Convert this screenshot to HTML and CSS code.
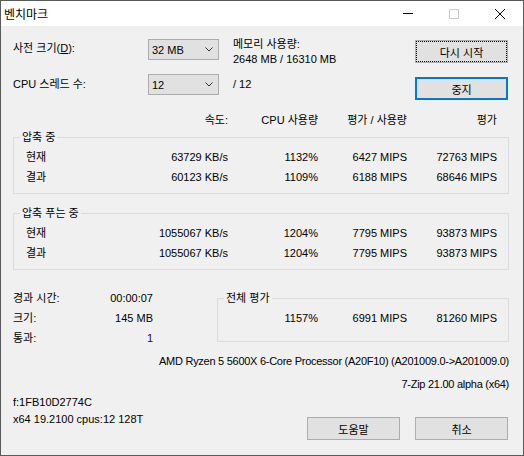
FILE: index.html
```html
<!DOCTYPE html>
<html lang="ko">
<head>
<meta charset="utf-8">
<title>벤치마크</title>
<link rel="stylesheet" href="styles.css">
</head>
<body>
<div class="window">
  <div class="titlebar">
    <span class="title">벤치마크</span>
    <div class="caption">
      <span class="cbtn"><svg width="10" height="10" viewBox="0 0 10 10"><line x1="0" y1="4.5" x2="10" y2="4.5" stroke="#000" stroke-width="1"/></svg></span>
      <span class="cbtn"><svg width="10" height="10" viewBox="0 0 10 10"><rect x="0.5" y="0.5" width="9" height="9" fill="none" stroke="#cccccc" stroke-width="1"/></svg></span>
      <span class="cbtn"><svg width="10" height="10" viewBox="0 0 10 10"><path d="M0 0 L10 10 M10 0 L0 10" stroke="#000" stroke-width="1"/></svg></span>
    </div>
  </div>
  <div class="content">
    <div class="top">
      <div class="lbl">사전 크기(<u>D</u>):</div>
      <div class="combo c1"><span>32 MB</span><svg width="8" height="5" viewBox="0 0 8 5"><path d="M0.5 0.5 L4 4 L7.5 0.5" fill="none" stroke="#333" stroke-width="1"/></svg></div>
      <div></div>
      <div class="mem">메모리 사용량:<br>2648 MB / 16310 MB</div>
      <button class="btn focus b1">다시 시작</button>
      <div class="lbl">CPU 스레드 수:</div>
      <div class="combo"><span>12</span><svg width="8" height="5" viewBox="0 0 8 5"><path d="M0.5 0.5 L4 4 L7.5 0.5" fill="none" stroke="#333" stroke-width="1"/></svg></div>
      <div></div>
      <div class="lbl">/ 12</div>
      <button class="btn default b2">중지</button>
    </div>

    <div class="row head">
      <span></span><span>속도:</span><span>CPU 사용량</span><span>평가 / 사용량</span><span>평가</span>
    </div>

    <fieldset class="group g1">
      <legend>압축 중</legend>
      <div class="row"><span>현재</span><span>63729 KB/s</span><span>1132%</span><span>6427 MIPS</span><span>72763 MIPS</span></div>
      <div class="row"><span>결과</span><span>60123 KB/s</span><span>1109%</span><span>6188 MIPS</span><span>68646 MIPS</span></div>
    </fieldset>

    <fieldset class="group g2">
      <legend>압축 푸는 중</legend>
      <div class="row"><span>현재</span><span>1055067 KB/s</span><span>1204%</span><span>7795 MIPS</span><span>93873 MIPS</span></div>
      <div class="row"><span>결과</span><span>1055067 KB/s</span><span>1204%</span><span>7795 MIPS</span><span>93873 MIPS</span></div>
    </fieldset>

    <div class="bottom">
      <div class="stats">
        <span>경과 시간:</span><span class="v">00:00:07</span>
        <span>크기:</span><span class="v">145 MB</span>
        <span>통과:</span><span class="v pass">1</span>
      </div>
      <fieldset class="group g3">
        <legend>전체 평가</legend>
        <div class="trow"><span>1157%</span><span>6991 MIPS</span><span>81260 MIPS</span></div>
      </fieldset>
    </div>

    <div class="info cpu">AMD Ryzen 5 5600X 6-Core Processor (A20F10) (A201009.0-&gt;A201009.0)</div>
    <div class="info ver">7-Zip 21.00 alpha (x64)</div>

    <div class="footer">
      <div class="sys">f:1FB10D2774C<br>x64 19.2100 cpus:12 128T</div>
      <div class="actions">
        <button class="btn">도움말</button>
        <button class="btn">취소</button>
      </div>
    </div>
  </div>
</div>
</body>
</html>
```
FILE: styles.css
```css
* { box-sizing: border-box; }
html, body { margin: 0; padding: 0; }
body {
  width: 524px;
  height: 456px;
  overflow: hidden;
  background: #f0f0f0;
  font-family: "Liberation Sans", "Noto Sans CJK KR", sans-serif;
  font-size: 11px;
  color: #000;
}
.window {
  width: 524px;
  height: 456px;
  border: 1px solid #5a5a5a;
  background: #f0f0f0;
}
.titlebar {
  height: 25px;
  background: #fff;
  display: flex;
  justify-content: space-between;
  align-items: stretch;
}
.title {
  font-family: "Noto Sans CJK KR", sans-serif;
  font-size: 12px;
  line-height: 25px;
  padding-left: 3px;
}
.caption { display: flex; }
.cbtn {
  width: 46px;
  display: flex;
  align-items: center;
  justify-content: center;
}
.cbtn svg { display: block; }

.content { padding: 0 14px 0 12px; }

.top {
  display: grid;
  grid-template-columns: 135px 71px 14px 1fr 93px;
  grid-template-rows: 28px 28px;
  row-gap: 8px;
  padding-top: 12px;
  margin-right: 1px;
}
.lbl { line-height: 20px; }
.combo {
  height: 21px;
  background: #e1e1e1;
  border: 1px solid #adadad;
  display: flex;
  align-items: center;
  justify-content: space-between;
  padding: 0 5px 0 3px;
}
.combo.c1 { margin-top: 1px; }
.mem { line-height: 15px; margin-top: -1px; }
.btn {
  font: inherit;
  color: #000;
  background: #e1e1e1;
  border: 1px solid #adadad;
  width: 93px;
  height: 23px;
  padding: 0;
  margin: 0;
}
.btn.focus { outline: 1px dotted #000; outline-offset: -2px; }
.btn.default { border: 2px solid #0078d7; }
.b1 { margin-top: 2px; }
.b2 { margin-top: 3px; }

.row {
  display: grid;
  grid-template-columns: 1fr 90px 90px 89px 90px;
  line-height: 20px;
}
.row span { text-align: right; white-space: nowrap; }
.row span:first-child { text-align: left; }
.head { margin-top: 8px; padding-right: 12px; }

.group {
  margin: 0;
  border: 1px solid #dcdcdc;
  padding: 3px 11px 6px 12px;
  min-width: 0;
}
.group legend {
  line-height: 14px;
  padding: 0 2px;
  margin-left: -6px;
}
.g2 { margin-top: 12px; }

.bottom {
  display: grid;
  grid-template-columns: 204px 1fr;
  align-items: start;
}
.stats {
  display: grid;
  grid-template-columns: 70px 70px;
  line-height: 20px;
  margin-top: 18px;
}
.stats .v { text-align: right; }
.stats .pass { color: #2a0a40; }
.g3 { margin-top: 21px; padding: 3px 11px 13px 0; }
.g3 legend { margin-left: 6px; }
.trow {
  display: grid;
  grid-template-columns: 90px 89px 90px;
  justify-content: end;
  line-height: 20px;
}
.trow span { text-align: right; }

.info { text-align: right; line-height: 20px; white-space: nowrap; letter-spacing: -0.27px; }
.cpu { margin-top: 3px; }
.ver { margin-top: 3px; }

.footer {
  display: flex;
  justify-content: space-between;
  align-items: flex-start;
}
.sys { line-height: 17px; }
.actions {
  display: flex;
  gap: 15px;
  margin-top: 23px;
  margin-right: 1px;
}
```
